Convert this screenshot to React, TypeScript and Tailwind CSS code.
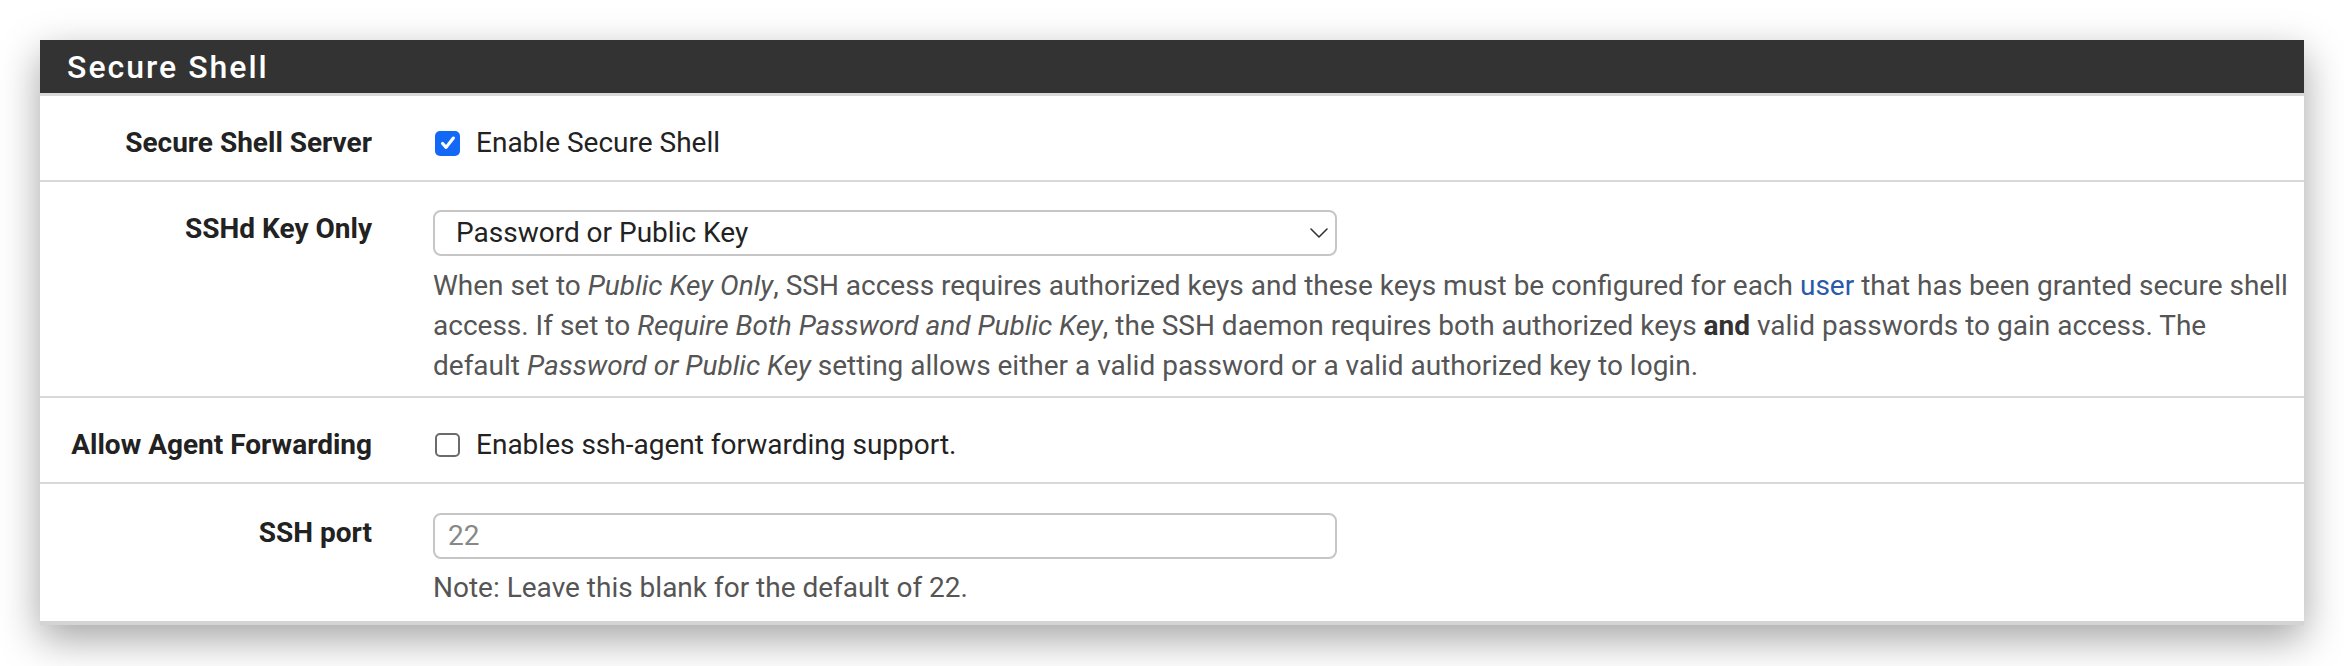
import React from "react";

const FONT = "font-['Roboto','Liberation_Sans',sans-serif]";

function CheckBox({ checked }: { checked: boolean }) {
  if (checked) {
    return (
      <span className="flex h-[25px] w-[25px] shrink-0 items-center justify-center rounded-[5px] bg-[#1269f5]">
        <svg width="18" height="18" viewBox="0 0 16 16" fill="none">
          <path d="M3.2 8.4l3.1 3.5L12.8 3.6" stroke="#fff" strokeWidth="2.8" strokeLinecap="round" strokeLinejoin="round" />
        </svg>
      </span>
    );
  }
  return <span className="h-[24px] w-[25px] shrink-0 rounded-[5px] border-2 border-[#6b6b6b] bg-white" />;
}

function Row({ label, children, last, top = 27 }: { label: string; children: React.ReactNode; last?: boolean; top?: number }) {
  return (
    <div className={`flex ${top === 29 ? "pt-[29px]" : "pt-[27px]"} ${last ? "" : "border-b-2 border-[#d9d9d9]"}`}>
      <div className="w-[332px] shrink-0 text-right text-[28px] font-bold leading-[40px] text-[#222]">{label}</div>
      <div className="ml-[61px] min-w-0 flex-1 pr-[15px]">{children}</div>
    </div>
  );
}

export default function App() {
  return (
    <div className={`min-h-[666px] bg-white pl-[40px] pt-[40px] ${FONT}`}>
      <div className="w-[2264px] border-b-[4px] border-[#d4d4d4] bg-white shadow-[0_14px_38px_rgba(0,0,0,0.36)]">
        {/* Panel heading */}
        <div className="flex h-[56px] items-center border-b-[3px] border-[#d9d9d9] bg-[#333333] pl-[27px]">
          <h2 className="text-[32px] font-medium tracking-[2px] text-white">Secure Shell</h2>
        </div>

        <Row label="Secure Shell Server">
          <label className="flex h-[57px] items-start gap-[16px] pb-[17px] pl-[2px] text-[28px] text-[#222]">
            <span className="flex h-[40px] items-center">
              <CheckBox checked />
            </span>
            <span className="leading-[40px]">Enable Secure Shell</span>
          </label>
        </Row>

        <Row label="SSHd Key Only">
          <div className="mt-[1px] flex h-[46px] w-[904px] items-center justify-between rounded-[8px] border-2 border-[#c6c6c6] bg-white pl-[21px] pr-[7px] text-[28px] text-[#222]">
            <span>Password or Public Key</span>
            <svg width="18" height="10" viewBox="0 0 18 10" fill="none">
              <path d="M1 1l8 8 8-8" stroke="#333" strokeWidth="1.6" strokeLinecap="round" strokeLinejoin="round" />
            </svg>
          </div>
          <p className="mt-[10px] pb-[10px] text-[28px] leading-[40px] text-[#555]">
            When set to <i>Public Key Only</i>, SSH access requires authorized keys and these keys must be configured for
            each <a className="text-[#2a5aa8]">user</a> that has been granted secure shell access. If set to{" "}
            <i>Require Both Password and Public Key</i>, the SSH daemon requires both authorized keys <b className="text-[#333]">and</b> valid
            passwords to gain access. The default <i>Password or Public Key</i> setting allows either a valid password or a valid
            authorized key to login.
          </p>
        </Row>

        <Row label="Allow Agent Forwarding">
          <label className="flex h-[57px] items-start gap-[16px] pb-[17px] pl-[2px] text-[28px] text-[#222]">
            <span className="flex h-[40px] items-center">
              <CheckBox checked={false} />
            </span>
            <span className="leading-[40px]">Enables ssh-agent forwarding support.</span>
          </label>
        </Row>

        <Row label="SSH port" last top={29}>
          <div className="flex h-[46px] w-[904px] items-center rounded-[8px] border-2 border-[#c6c6c6] bg-white pl-[13px] text-[28px] text-[#888]">
            22
          </div>
          <p className="mt-[9px] pb-[13px] text-[28px] leading-[40px] text-[#555]">Note: Leave this blank for the default of 22.</p>
        </Row>
      </div>
    </div>
  );
}
